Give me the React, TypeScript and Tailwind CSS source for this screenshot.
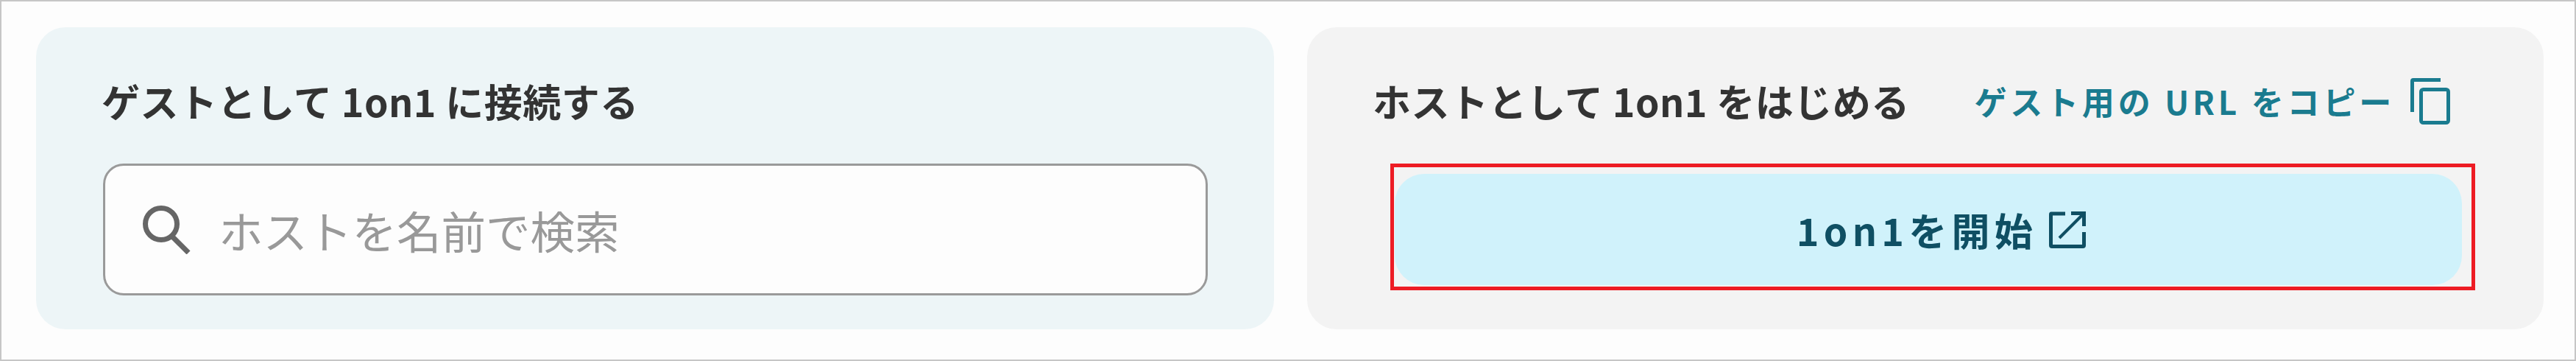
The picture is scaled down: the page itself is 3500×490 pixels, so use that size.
import * as React from 'react';

const SearchIcon = () => (
  <svg width="66" height="66" viewBox="0 0 66 66" fill="none" stroke="#666666" className="shrink-0">
    <circle cx="26" cy="25" r="21.5" strokeWidth="7" />
    <path d="M40 41 L63 64" strokeWidth="7" />
  </svg>
);

const CopyIcon = () => (
  <svg width="54" height="63" viewBox="0 0 54 63" fill="none" stroke="#1a7b8f" strokeWidth="5" className="shrink-0">
    <path d="M2.5 46 V4 Q2.5 2.5 4 2.5 H41" />
    <rect x="14.5" y="15.5" width="37" height="45" rx="3" />
  </svg>
);

const ExternalIcon = () => (
  <svg width="50" height="50" viewBox="0 0 50 50" fill="none" stroke="#0f4f63" strokeWidth="5" className="shrink-0">
    <path d="M22 3 H3 Q2.5 3 2.5 4 V46 Q2.5 47.5 4 47.5 H46 Q47.5 47.5 47.5 46 V28" />
    <path d="M14 36 L46 4" strokeWidth="4" />
    <path d="M30 2.5 H47.5 V20" />
  </svg>
);

const App = () => {
  return (
    <div className="w-[3500px] h-[490px] border-2 border-[#c6c6c6] bg-[#fdfdfd] pl-[47px] pr-[42px] pt-[35px] flex gap-[45px] font-['Noto_Sans_CJK_JP',sans-serif]">
      <section className="w-[1682px] h-[410px] rounded-[40px] bg-[#edf5f7] pl-[91px] pt-[60px]">
        <h2 className="-ml-[2px] text-[52px] leading-[80px] font-bold text-[#333333] tracking-[0.5px]">ゲストとして 1on1 に接続する</h2>
        <div className="mt-[45px] w-[1501px] h-[179px] rounded-[28px] border-[3px] border-[#9a9a9a] bg-[#fdfdfd] flex items-center pl-[50px] gap-[38px]">
          <SearchIcon />
          <input
            placeholder="ホストを名前で検索"
            className="flex-1 outline-none text-[60.5px] leading-[80px] bg-transparent placeholder:text-[#999999]"
          />
        </div>
      </section>
      <section className="w-[1680px] h-[410px] rounded-[40px] bg-[#f3f3f3] pl-[91px] pt-[60px]">
        <div className="flex items-center h-[80px] w-[1462px]">
          <h2 className="-ml-[2px] text-[52px] leading-[80px] font-bold text-[#333333] tracking-[0.5px] whitespace-nowrap">ホストとして 1on1 をはじめる</h2>
          <div className="ml-auto flex items-center gap-[21px]">
            <span className="text-[44px] leading-[60px] font-bold text-[#1a7b8f] tracking-[4.8px] whitespace-nowrap">ゲスト用の URL をコピー</span>
            <CopyIcon />
          </div>
        </div>
        <div className="mt-[45px] ml-[22px] w-[1474px] h-[172px] border-[5px] border-[#ed1c24] pl-px pt-[9px] pr-[13px] pb-[2px]">
          <button className="w-full h-full rounded-[40px] bg-[#d0f2fb] flex items-center justify-center pl-[35px] gap-[16px] text-[#0f4f63] text-[52px] font-bold tracking-[6.3px]">
            <span>1on1を開始</span>
            <ExternalIcon />
          </button>
        </div>
      </section>
    </div>
  );
};

export default App;
